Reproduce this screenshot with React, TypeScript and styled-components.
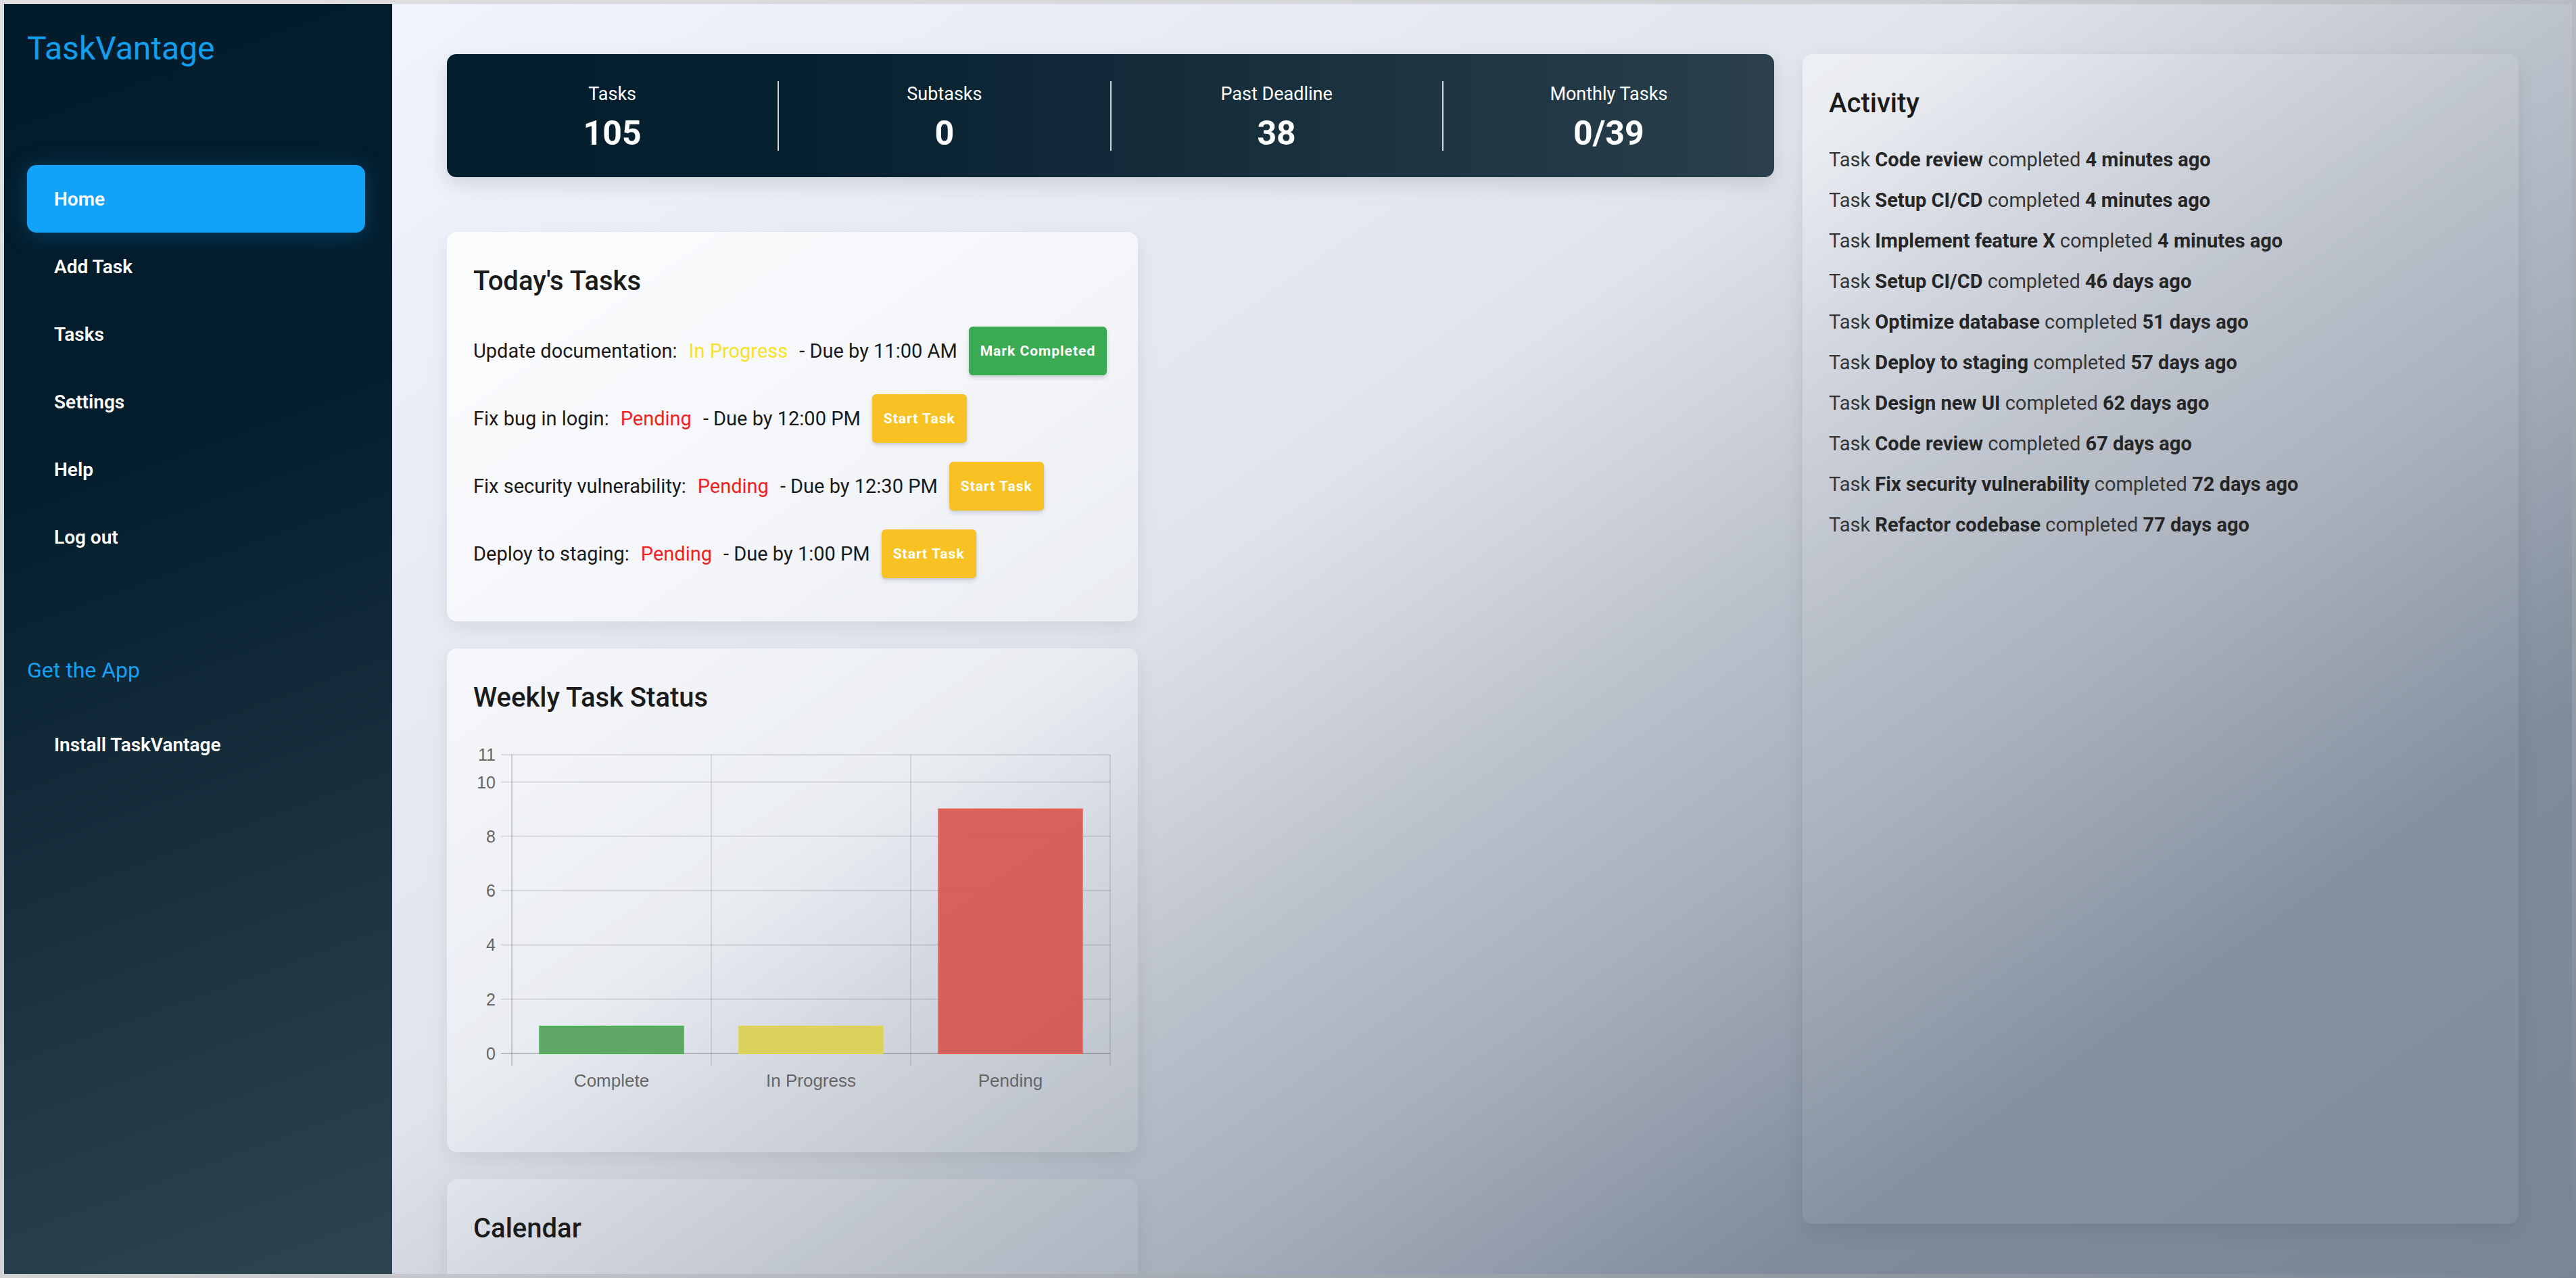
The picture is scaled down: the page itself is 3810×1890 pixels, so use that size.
import React from 'react';
import styled, { createGlobalStyle } from 'styled-components';

const GlobalStyle = createGlobalStyle`
  *, *::before, *::after { box-sizing: border-box; }
  html, body, #root { height: 100%; }
  html {
    background: linear-gradient(145deg, #e0e0e0 0%, #d2d3d4 41%, #b8bcc2 58%, #a3a9b0 69%, #7a8594 100%);
  }
  body {
    margin: 0;
    padding: 6px;
    overflow: hidden;
    font-family: Roboto, "Noto Sans", "Liberation Sans", sans-serif;
  }
`;

const Layout = styled.div`
  display: flex;
  height: 100%;
`;

const Sidebar = styled.aside`
  flex: none;
  width: 574px;
  padding: 36px 40px 0 34px;
  background: linear-gradient(160deg, #031c2b 0%, #041e2d 35%, #2f4451 100%);
  display: flex;
  flex-direction: column;
`;

const Logo = styled.h1`
  margin: 0 0 142px;
  font-size: 48px;
  line-height: 60px;
  font-weight: 400;
  color: #139ff0;
`;

const NavList = styled.nav`
  display: flex;
  flex-direction: column;
`;

const NavItem = styled.a<{ $active?: boolean }>`
  display: flex;
  align-items: center;
  height: 100px;
  padding-left: 40px;
  border-radius: 14px;
  font-size: 28px;
  font-weight: 600;
  color: #ffffff;
  text-decoration: none;
  background: ${p => (p.$active ? '#12a2f7' : 'transparent')};
  box-shadow: ${p => (p.$active ? '0 4px 34px rgba(20, 150, 240, 0.28)' : 'none')};
`;

const SideHeading = styled.h3`
  margin: 128px 0 41px;
  font-size: 32px;
  line-height: 38px;
  font-weight: 400;
  color: #14a1f3;
`;

const Main = styled.main`
  flex: 1;
  min-width: 0;
  display: grid;
  grid-template-columns: 1963fr 1059fr;
  grid-template-rows: minmax(0, 1fr);
  column-gap: 42px;
  padding: 74px 79px 74px 81px;
  overflow: hidden;
  background: linear-gradient(145deg, #f0f4fc 0%, #e0e4ec 40%, #bcc2cc 55%, #a7afbb 65%, #7f8b9b 80%, #7a8696 100%);
`;

const LeftColumn = styled.div`
  display: flex;
  flex-direction: column;
  min-height: 0;
`;

const StatsBar = styled.section`
  display: flex;
  padding: 40px 0 39px;
  margin-bottom: 81px;
  border-radius: 14px;
  color: #ffffff;
  background: linear-gradient(to right, #031e2d 0%, #06202f 25%, #2b3f4c 100%);
  box-shadow: 0 10px 30px rgba(0, 0, 0, 0.12);
`;

const Stat = styled.div`
  flex: 1 1 0;
  height: 103px;
  text-align: center;
  & + & {
    border-left: 2px solid rgba(255, 255, 255, 0.8);
  }
`;

const StatLabel = styled.div`
  margin-top: 3px;
  font-size: 27px;
  line-height: 32px;
  font-weight: 400;
`;

const StatValue = styled.div`
  margin-top: 13px;
  font-size: 50px;
  line-height: 58px;
  font-weight: 700;
`;

const CardStack = styled.div`
  width: 1022px;
  display: flex;
  flex-direction: column;
  gap: 40px;
`;

const Card = styled.section<{ $fill?: boolean }>`
  border-radius: 15px;
  padding: 40px 40px 40px 39px;
  background: linear-gradient(
      145deg,
      rgba(255, 255, 255, 0.86) 15%,
      rgba(255, 255, 255, 0.62) 32%,
      rgba(255, 255, 255, 0.34) 45%,
      rgba(255, 255, 255, 0.13) 52%,
      rgba(255, 255, 255, 0.06) 62%,
      rgba(255, 255, 255, 0.05) 100%
    )
    fixed;
  box-shadow: 0 10px 30px rgba(0, 0, 0, 0.08);
  ${p => (p.$fill ? 'height: 100%;' : '')}
`;

const CardTitle = styled.h2<{ $gap?: number }>`
  margin: 9px 0 ${p => p.$gap ?? 44}px;
  font-size: 40px;
  line-height: 47px;
  font-weight: 500;
  color: #1b1b1b;
`;

const TaskList = styled.div`
  display: flex;
  flex-direction: column;
  gap: 28px;
  margin-bottom: 24px;
`;

const TaskRow = styled.div`
  display: flex;
  align-items: center;
  gap: 17px;
  height: 72px;
  font-size: 29px;
  color: #1a1a1a;
  white-space: nowrap;
`;

const Status = styled.span<{ $status: string }>`
  color: ${p => (p.$status === 'In Progress' ? '#f6e22a' : '#f41e1e')};
`;

const ActionButton = styled.button<{ $variant: 'complete' | 'start' }>`
  height: 72px;
  padding: 0 17px;
  border: none;
  border-radius: 6px;
  font-family: Roboto, "Noto Sans", sans-serif;
  font-size: 21px;
  font-weight: 700;
  letter-spacing: 1px;
  color: #ffffff;
  background: ${p => (p.$variant === 'complete' ? '#3aab52' : '#f9c224')};
  box-shadow: 0 4px 6px rgba(50, 50, 93, 0.14), 0 1px 3px rgba(0, 0, 0, 0.1);
  cursor: pointer;
`;

const ChartWrap = styled.div`
  height: 565px;
`;

const CalendarBody = styled.div`
  height: 600px;
`;

const ActivityItem = styled.p`
  margin: 0 0 24px;
  font-size: 29px;
  line-height: 36px;
  color: #363636;
  b {
    font-weight: 700;
    color: #262626;
  }
`;

const tasks = [
  { name: 'Update documentation', status: 'In Progress', due: '11:00 AM', action: 'Mark Completed' },
  { name: 'Fix bug in login', status: 'Pending', due: '12:00 PM', action: 'Start Task' },
  { name: 'Fix security vulnerability', status: 'Pending', due: '12:30 PM', action: 'Start Task' },
  { name: 'Deploy to staging', status: 'Pending', due: '1:00 PM', action: 'Start Task' },
];

const activity = [
  ['Code review', '4 minutes ago'],
  ['Setup CI/CD', '4 minutes ago'],
  ['Implement feature X', '4 minutes ago'],
  ['Setup CI/CD', '46 days ago'],
  ['Optimize database', '51 days ago'],
  ['Deploy to staging', '57 days ago'],
  ['Design new UI', '62 days ago'],
  ['Code review', '67 days ago'],
  ['Fix security vulnerability', '72 days ago'],
  ['Refactor codebase', '77 days ago'],
];

const stats = [
  ['Tasks', '105'],
  ['Subtasks', '0'],
  ['Past Deadline', '38'],
  ['Monthly Tasks', '0/39'],
];

const bars = [
  { label: 'Complete', value: 1, fill: 'rgba(80, 160, 88, 0.9)', stroke: 'rgba(76, 175, 80, 1)' },
  { label: 'In Progress', value: 1, fill: 'rgba(218, 208, 75, 0.9)', stroke: 'rgba(225, 212, 80, 1)' },
  { label: 'Pending', value: 9, fill: 'rgba(214, 80, 72, 0.88)', stroke: 'rgba(230, 95, 85, 1)' },
];

const WeeklyChart: React.FC = () => {
  const W = 943;
  const H = 565;
  const y0 = 459;
  const unit = 40.15;
  const left = 57;
  const right = 942;
  const cat = (right - left) / 3;
  const ticks = [0, 2, 4, 6, 8, 10, 11];
  const vlines = [left, left + cat, left + 2 * cat, right];
  const yOf = (v: number) => y0 - v * unit;
  const labelFont = '"Liberation Sans", Arial, sans-serif';
  return (
    <svg width={W} height={H} viewBox={`0 0 ${W} ${H}`}>
      {ticks.map(v => (
        <line
          key={`h${v}`}
          x1={41}
          x2={right}
          y1={yOf(v)}
          y2={yOf(v)}
          stroke={v === 0 ? 'rgba(0,0,0,0.2)' : 'rgba(0,0,0,0.1)'}
          strokeWidth={2}
        />
      ))}
      {vlines.map((x, i) => (
        <line
          key={`v${i}`}
          x1={x}
          x2={x}
          y1={yOf(11)}
          y2={y0 + 18}
          stroke={i === 0 ? 'rgba(0,0,0,0.17)' : 'rgba(0,0,0,0.1)'}
          strokeWidth={2}
        />
      ))}
      {ticks.map(v => (
        <text
          key={`t${v}`}
          x={33}
          y={yOf(v)}
          textAnchor="end"
          dominantBaseline="central"
          fontFamily={labelFont}
          fontSize={25}
          fill="#666"
        >
          {v}
        </text>
      ))}
      {bars.map((b, i) => {
        const cx = left + cat * (i + 0.5);
        const bw = cat * 0.72;
        const top = yOf(b.value);
        return (
          <g key={b.label}>
            <rect
              x={cx - bw / 2}
              y={top}
              width={bw}
              height={y0 - top}
              fill={b.fill}
              stroke={b.stroke}
              strokeWidth={2}
            />
            <text
              x={cx}
              y={499}
              textAnchor="middle"
              dominantBaseline="central"
              fontFamily={labelFont}
              fontSize={26}
              fill="#666"
            >
              {b.label}
            </text>
          </g>
        );
      })}
    </svg>
  );
};

export default function App() {
  return (
    <>
      <GlobalStyle />
      <Layout>
        <Sidebar>
          <Logo>TaskVantage</Logo>
          <NavList>
            <NavItem $active>Home</NavItem>
            <NavItem>Add Task</NavItem>
            <NavItem>Tasks</NavItem>
            <NavItem>Settings</NavItem>
            <NavItem>Help</NavItem>
            <NavItem>Log out</NavItem>
          </NavList>
          <SideHeading>Get the App</SideHeading>
          <NavList>
            <NavItem>Install TaskVantage</NavItem>
          </NavList>
        </Sidebar>
        <Main>
          <LeftColumn>
            <StatsBar>
              {stats.map(([label, value]) => (
                <Stat key={label}>
                  <StatLabel>{label}</StatLabel>
                  <StatValue>{value}</StatValue>
                </Stat>
              ))}
            </StatsBar>
            <CardStack>
              <Card>
                <CardTitle>Today's Tasks</CardTitle>
                <TaskList>
                  {tasks.map(t => (
                    <TaskRow key={t.name}>
                      <span>{t.name}:</span>
                      <Status $status={t.status}>{t.status}</Status>
                      <span>- Due by {t.due}</span>
                      <ActionButton $variant={t.action === 'Mark Completed' ? 'complete' : 'start'}>
                        {t.action}
                      </ActionButton>
                    </TaskRow>
                  ))}
                </TaskList>
              </Card>
              <Card>
                <CardTitle>Weekly Task Status</CardTitle>
                <ChartWrap>
                  <WeeklyChart />
                </ChartWrap>
              </Card>
              <Card>
                <CardTitle>Calendar</CardTitle>
                <CalendarBody />
              </Card>
            </CardStack>
          </LeftColumn>
          <Card $fill>
            <CardTitle $gap={42}>Activity</CardTitle>
            {activity.map(([name, when], i) => (
              <ActivityItem key={i}>
                Task <b>{name}</b> completed <b>{when}</b>
              </ActivityItem>
            ))}
          </Card>
        </Main>
      </Layout>
    </>
  );
}
